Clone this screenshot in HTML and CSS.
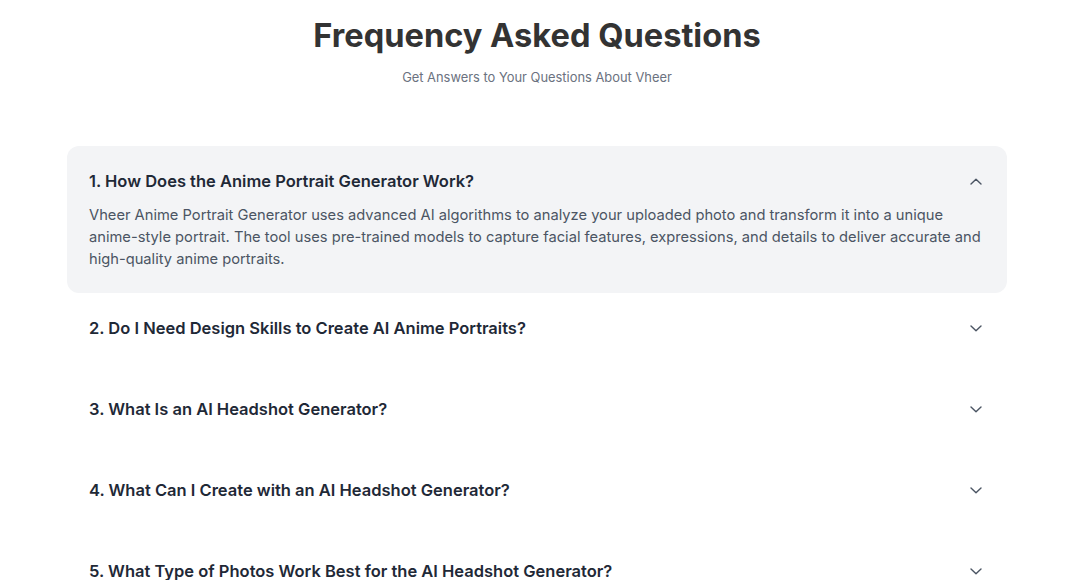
FILE: index.html
```html
<!DOCTYPE html>
<html lang="en">
<head>
<meta charset="utf-8">
<link rel="stylesheet" href="styles.css">
</head>
<body>
<section class="faq">
  <header class="faq-head">
    <h2 class="faq-title">Frequency Asked Questions</h2>
    <p class="faq-sub">Get Answers to Your Questions About Vheer</p>
  </header>
  <div class="faq-list">
    <div class="item open">
      <div class="q-row">
        <h3 class="q">1. How Does the Anime Portrait Generator Work?</h3>
        <svg class="chev" viewBox="0 0 12 7" width="12" height="7"><path d="M1 6L6 1.2 11 6" fill="none" stroke="currentColor" stroke-width="1.4" stroke-linecap="round" stroke-linejoin="round"/></svg>
      </div>
      <div class="a">Vheer Anime Portrait Generator uses advanced AI algorithms to analyze your uploaded photo and transform it into a unique anime-style portrait. The tool uses pre-trained models to capture facial features, expressions, and details to deliver accurate and high-quality anime portraits.</div>
    </div>
    <div class="item">
      <div class="q-row">
        <h3 class="q">2. Do I Need Design Skills to Create AI Anime Portraits?</h3>
        <svg class="chev" viewBox="0 0 12 7" width="12" height="7"><path d="M1 1L6 5.8 11 1" fill="none" stroke="currentColor" stroke-width="1.4" stroke-linecap="round" stroke-linejoin="round"/></svg>
      </div>
      <div class="a"></div>
    </div>
    <div class="item">
      <div class="q-row">
        <h3 class="q">3. What Is an AI Headshot Generator?</h3>
        <svg class="chev" viewBox="0 0 12 7" width="12" height="7"><path d="M1 1L6 5.8 11 1" fill="none" stroke="currentColor" stroke-width="1.4" stroke-linecap="round" stroke-linejoin="round"/></svg>
      </div>
      <div class="a"></div>
    </div>
    <div class="item">
      <div class="q-row">
        <h3 class="q">4. What Can I Create with an AI Headshot Generator?</h3>
        <svg class="chev" viewBox="0 0 12 7" width="12" height="7"><path d="M1 1L6 5.8 11 1" fill="none" stroke="currentColor" stroke-width="1.4" stroke-linecap="round" stroke-linejoin="round"/></svg>
      </div>
      <div class="a"></div>
    </div>
    <div class="item">
      <div class="q-row">
        <h3 class="q">5. What Type of Photos Work Best for the AI Headshot Generator?</h3>
        <svg class="chev" viewBox="0 0 12 7" width="12" height="7"><path d="M1 1L6 5.8 11 1" fill="none" stroke="currentColor" stroke-width="1.4" stroke-linecap="round" stroke-linejoin="round"/></svg>
      </div>
      <div class="a"></div>
    </div>
  </div>
</section>
</body>
</html>
```
FILE: styles.css
```css
html, body {
  margin: 0;
  padding: 0;
  background: #ffffff;
}
body {
  font-family: Inter, "Noto Sans", sans-serif;
  padding-right: 6px;
  overflow: hidden;
}
.faq {
  width: 940px;
  margin: 0 auto;
}
.faq-head {
  text-align: center;
  padding-top: 14px;
}
.faq-title {
  margin: 0;
  font-size: 32.6px;
  line-height: 42px;
  font-weight: 700;
  color: #333333;
}
.faq-sub {
  margin: 14px 0 0;
  font-size: 12.9px;
  line-height: 16px;
  color: #6b7280;
}
.faq-list {
  margin-top: 60px;
  display: flex;
  flex-direction: column;
}
.item {
  padding: 23px 25px 23px 22px;
  border-radius: 12px;
}
.item.open {
  background: #f3f4f6;
}
.q-row {
  display: flex;
  align-items: center;
  justify-content: space-between;
  height: 24px;
}
.q {
  margin: 0;
  font-size: 16.5px;
  line-height: 24px;
  font-weight: 600;
  color: #1f2937;
}
.chev {
  color: #4b5563;
  flex: none;
}
.a {
  margin-top: 11px;
  font-size: 14.7px;
  line-height: 22px;
  color: #4b5563;
}
```
